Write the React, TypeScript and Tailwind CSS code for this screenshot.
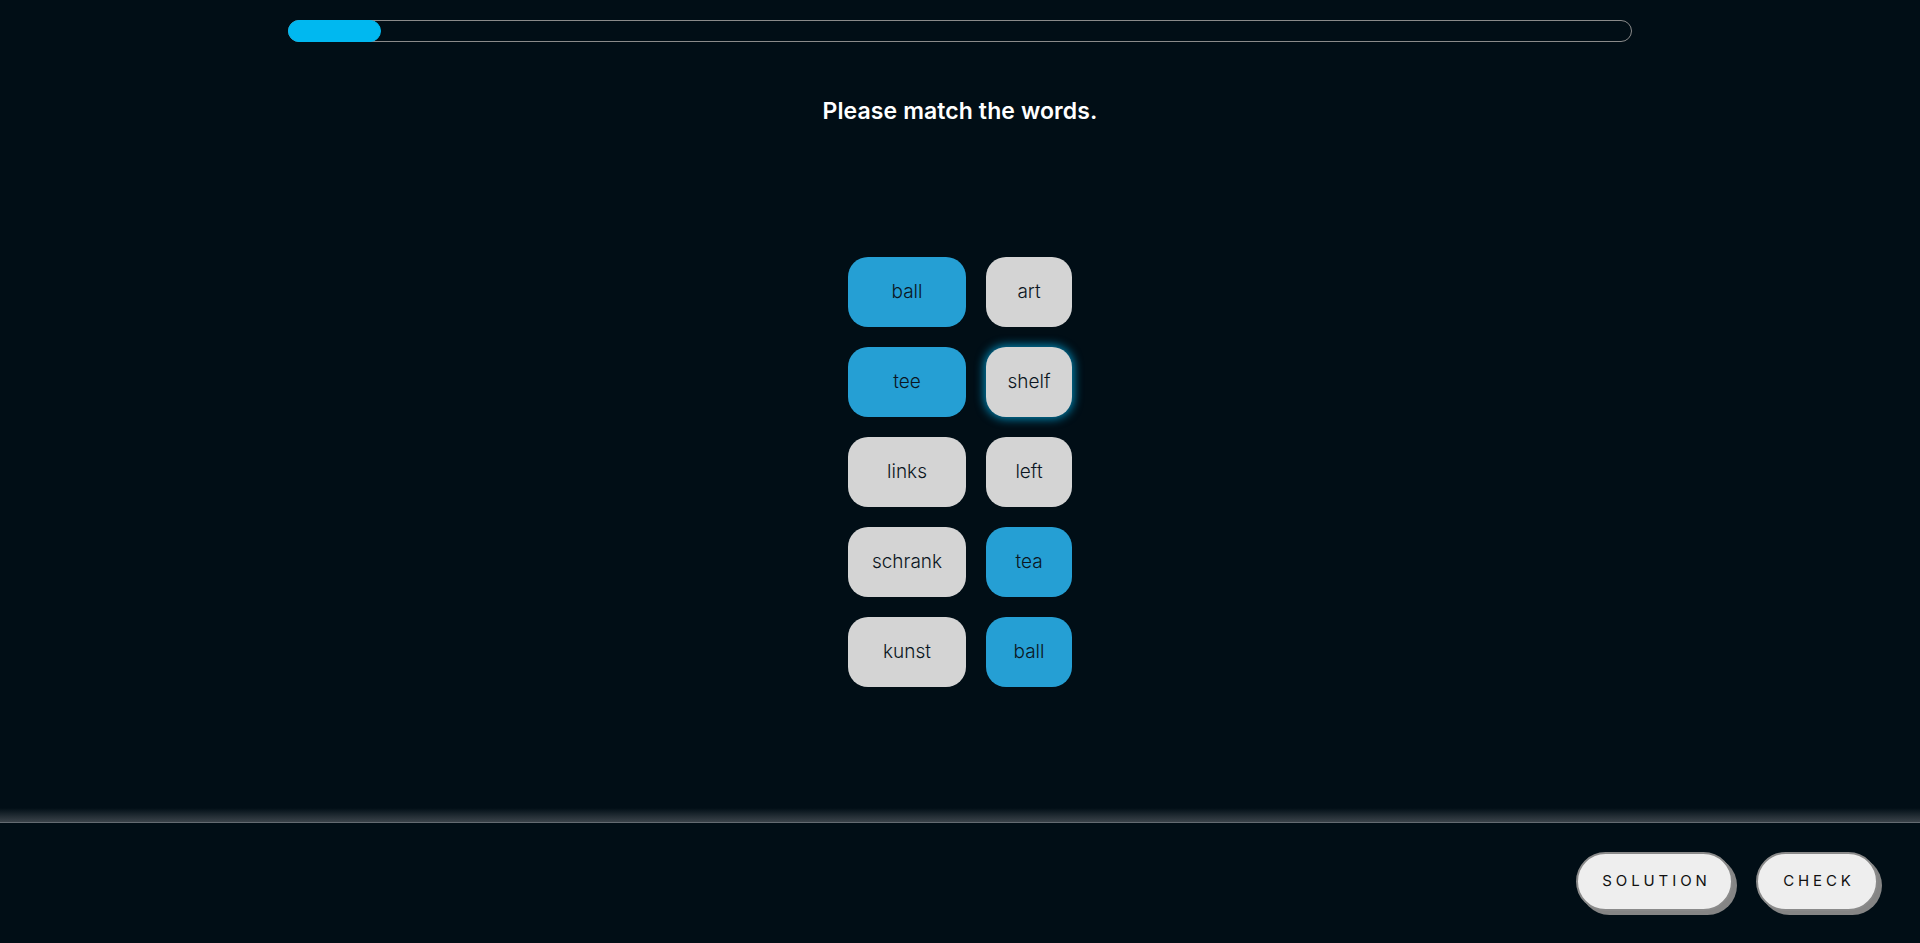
import React, { useState } from "react"

type Word = {
  label: string
  selected: boolean
}

const leftWords: Word[] = [
  { label: "ball", selected: true },
  { label: "tee", selected: true },
  { label: "links", selected: false },
  { label: "schrank", selected: false },
  { label: "kunst", selected: false },
]

const rightWords: Word[] = [
  { label: "art", selected: false },
  { label: "shelf", selected: false },
  { label: "left", selected: false },
  { label: "tea", selected: true },
  { label: "ball", selected: true },
]

function WordButton({
  word,
  width,
  focused,
  onClick,
}: {
  word: Word
  width: string
  focused?: boolean
  onClick?: () => void
}) {
  return (
    <button
      onClick={onClick}
      className={`${width} h-[70px] rounded-[20px] flex items-center justify-center text-[19px] font-light text-[#0b1622] ${
        word.selected ? "bg-[#259fd4]" : "bg-[#d4d4d4]"
      } ${focused ? "shadow-[0_0_10px_2px_rgba(0,170,225,0.75)]" : ""}`}
    >
      {word.label}
    </button>
  )
}

export default function App() {
  const [focused, setFocused] = useState(1)

  return (
    <div
      className="flex flex-col h-[943px] w-full bg-[#010e16] text-white overflow-hidden"
      style={{ fontFamily: "Inter, 'Open Sans', sans-serif" }}
    >
      {/* main area */}
      <div className="flex-1 flex flex-col items-center">
        <div className="mt-[20px] w-[1344px] h-[22px] rounded-full border border-[#8a8a8a] flex">
          <div className="w-[91px] h-full rounded-full bg-[#00b8f0] -ml-px -my-px box-content border border-[#00b8f0]" />
        </div>

        <h1 className="mt-[52px] text-[23px] leading-[34px] font-semibold tracking-[0.1px] text-white">
          Please match the words.
        </h1>

        <div className="mt-[129px] flex gap-[20px]">
          <div className="flex flex-col gap-[20px]">
            {leftWords.map((w, i) => (
              <WordButton key={`l-${i}`} word={w} width="w-[118px]" />
            ))}
          </div>
          <div className="flex flex-col gap-[20px]">
            {rightWords.map((w, i) => (
              <WordButton
                key={`r-${i}`}
                word={w}
                width="w-[86px]"
                focused={focused === i}
                onClick={() => setFocused(i)}
              />
            ))}
          </div>
        </div>
      </div>

      {/* footer */}
      <div className="h-[14px] bg-gradient-to-b from-transparent to-[#3b434a]" />
      <div className="h-[121px] border-t border-[#646b72] flex items-center justify-end gap-[23px] pr-[42px] pb-[4px]">
        <button className="w-[157px] h-[59px] rounded-full bg-[#eeeeee] border-2 border-[#8a8a8a] shadow-[4px_4px_0_#858585] text-[15px] tracking-[0.26em] text-[#111] pl-[4px]">
          SOLUTION
        </button>
        <button className="w-[122px] h-[59px] rounded-full bg-[#eeeeee] border-2 border-[#8a8a8a] shadow-[4px_4px_0_#858585] text-[15px] tracking-[0.26em] text-[#111] pl-[4px]">
          CHECK
        </button>
      </div>
    </div>
  )
}
